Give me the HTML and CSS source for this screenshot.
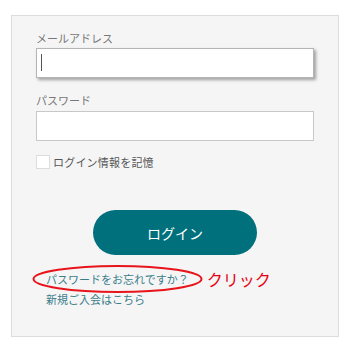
FILE: index.html
```html
<!DOCTYPE html>
<html lang="ja">
<head>
  <meta charset="UTF-8" />
  <meta name="viewport" content="width=device-width, initial-scale=1.0"/>
  <title>ログイン</title>
  <link rel="stylesheet" href="styles.css">
</head>
<body>

  <div class="login-box">
    <!-- Email -->
    <label class="field-label" for="email">メールアドレス</label>
    <div class="field-wrap">
      <input type="text" id="email" class="field focused">
      <span class="caret"></span>
    </div>

    <!-- Password -->
    <label class="field-label pw-label" for="password">パスワード</label>
    <div class="field-wrap">
      <input type="password" id="password" class="field">
    </div>

    <label class="remember">
      <span class="check-box"></span>
      <span>ログイン情報を記憶</span>
    </label>

    <button class="login-btn">ログイン</button>

    <div class="links">
      <div class="forgot-row">
        <a href="#" class="link forgot">パスワードをお忘れですか？</a>
        <svg class="circle-mark" width="171" height="30" viewBox="0 0 171 30">
          <ellipse cx="85.5" cy="15" rx="84" ry="13" fill="none" stroke="#e8141b" stroke-width="2"/>
        </svg>
        <span class="click-note">クリック</span>
      </div>
      <a href="#" class="link">新規ご入会はこちら</a>
    </div>
  </div>

</body>
</html>
```

FILE: styles.css
```css
body {
  font-family: "Noto Sans CJK JP", "Noto Sans", sans-serif;
  margin: 0;
  background-color: #fff;
}

.login-box {
  margin: 15px 11px;
  width: 328px;
  box-sizing: border-box;
  background: #f5f5f5;
  border: 1px solid #dcdcdc;
  padding: 14px 24px 27px;
}

.field-label {
  display: block;
  font-size: 11px;
  line-height: 16px;
  color: #777;
  margin-bottom: 2px;
}

.pw-label {
  margin-top: 14px;
  margin-bottom: 3px;
}

.field-wrap {
  position: relative;
}

.field {
  display: block;
  width: 100%;
  height: 30px;
  box-sizing: border-box;
  border: 1px solid #c8c8c8;
  background: #fff;
  outline: none;
  padding: 0 6px;
}

.field.focused {
  border-color: #b5b5b5;
  box-shadow: 2px 2px 3px rgba(0,0,0,0.35);
}

.caret {
  position: absolute;
  left: 5px;
  top: 6px;
  width: 1px;
  height: 17px;
  background: #555;
}

.remember {
  display: flex;
  align-items: center;
  margin-top: 14px;
  font-size: 11px;
  line-height: 13px;
  color: #555;
  letter-spacing: 0.2px;
}

.check-box {
  width: 12px;
  height: 12px;
  background: #fff;
  border: 1px solid #ddd;
  margin-right: 3px;
}

.login-btn {
  display: block;
  margin: 41px auto 0;
  width: 164px;
  height: 45px;
  border: none;
  border-radius: 23px;
  background-color: #00707c;
  color: #fff;
  font-family: inherit;
  font-size: 14px;
  cursor: pointer;
}

.links {
  margin-top: 14px;
  padding-left: 10px;
}

.forgot-row {
  position: relative;
  display: flex;
  align-items: center;
}

.link {
  display: block;
  font-size: 11px;
  line-height: 20px;
  color: #3b7e8a;
  text-decoration: none;
}

.circle-mark {
  position: absolute;
  left: -14px;
  top: -5px;
}

.click-note {
  margin-left: 18px;
  font-size: 16px;
  line-height: 20px;
  color: #e60012;
}
```
